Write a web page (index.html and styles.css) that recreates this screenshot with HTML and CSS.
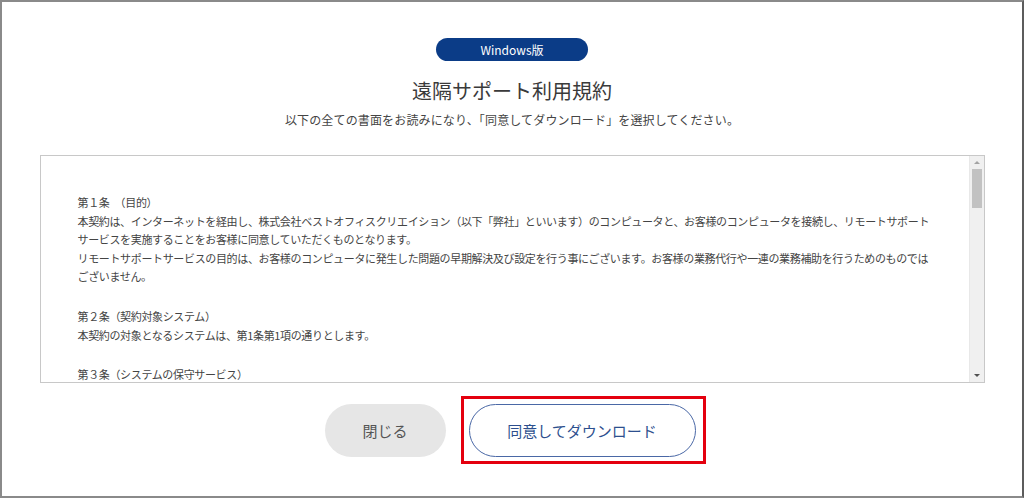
FILE: index.html
```html
<!DOCTYPE html>
<html lang="ja">
<head>
    <meta charset="UTF-8">
    <meta name="viewport" content="width=device-width, initial-scale=1.0">
    <title>遠隔サポート利用規約</title>
    <link rel="stylesheet" href="styles.css">
</head>
<body>
  <div class="modal">
    <div class="badge">Windows版</div>
    <h1>遠隔サポート利用規約</h1>
    <p class="subtitle">以下の全ての書面をお読みになり、「同意してダウンロード」を選択してください。</p>

    <div class="terms">
        <div class="terms-body">
            <p>第１条　（目的）<br>
            本契約は、インターネットを経由し、株式会社ベストオフィスクリエイション（以下「弊社」といいます）のコンピュータと、お客様のコンピュータを接続し、リモートサポート<br>
            サービスを実施することをお客様に同意していただくものとなります。<br>
            リモートサポートサービスの目的は、お客様のコンピュータに発生した問題の早期解決及び設定を行う事にございます。お客様の業務代行や一連の業務補助を行うためのものでは<br>
            ございません。</p>
            <p>第２条（契約対象システム）<br>
            本契約の対象となるシステムは、第1条第1項の通りとします。</p>
            <p>第３条（システムの保守サービス）</p>
        </div>
        <div class="scrollbar">
            <span class="arrow up"></span>
            <div class="track"><div class="thumb"></div></div>
            <span class="arrow down"></span>
        </div>
    </div>

    <div class="actions">
        <button class="btn btn-close">閉じる</button>
        <div class="highlight">
            <button class="btn btn-agree">同意してダウンロード</button>
        </div>
    </div>
  </div>
</body>
</html>
```

FILE: styles.css
```css
html, body {
    margin: 0;
    padding: 0;
}
body {
    font-family: "Noto Sans CJK JP", "Noto Sans", sans-serif;
    background-color: #ffffff;
    color: #333;
}
.modal {
    box-sizing: border-box;
    width: 1024px;
    height: 498px;
    border: 2px solid #8a8a8a;
    border-right-color: #5c5c5c;
    background-color: #fff;
    padding: 36px 38px 0;
    display: flex;
    flex-direction: column;
    align-items: center;
}
.badge {
    width: 152px;
    height: 23px;
    border-radius: 12px;
    background-color: #0b3c87;
    color: #fff;
    font-size: 12px;
    line-height: 23px;
    text-align: center;
}
h1 {
    font-size: 20px;
    font-weight: 400;
    color: #3a3a3a;
    margin: 17px 0 0;
    line-height: 26px;
}
.subtitle {
    font-size: 12px;
    letter-spacing: 0.15px;
    color: #444;
    margin: 7px 0 0;
    line-height: 17px;
}
.terms {
    margin-top: 27px;
    width: 945px;
    height: 228px;
    box-sizing: border-box;
    border: 1px solid #c8c8c8;
    display: flex;
    overflow: hidden;
}
.terms-body {
    flex: 1;
    padding: 37px 0 0 37px;
    overflow: hidden;
    font-size: 11px;
    letter-spacing: -0.35px;
    line-height: 18.6px;
    color: #444;
    white-space: nowrap;
}
.terms-body p {
    margin: 0 0 21px;
}
.scrollbar {
    width: 14px;
    background-color: #f0f0f0;
    border-left: 1px solid #e8e8e8;
    display: flex;
    flex-direction: column;
    align-items: center;
}
.arrow {
    width: 0;
    height: 0;
    margin: 5px 0;
    border-left: 3px solid transparent;
    border-right: 3px solid transparent;
}
.arrow.up {
    border-bottom: 3px solid #a3a3a3;
}
.arrow.down {
    border-top: 3px solid #505050;
}
.track {
    flex: 1;
    width: 100%;
    display: flex;
    justify-content: center;
}
.thumb {
    width: 10px;
    height: 39px;
    background-color: #c2c2c2;
}
.actions {
    margin-top: 13px;
    display: flex;
    align-items: center;
    gap: 15px;
    margin-left: 6px;
}
.btn {
    font-family: inherit;
    font-size: 15px;
    height: 53px;
    border-radius: 27px;
    cursor: pointer;
}
.btn-close {
    width: 121px;
    border: none;
    background-color: #e6e6e6;
    color: #555;
}
.highlight {
    border: 3px solid #e4000f;
    padding: 5px 7px 4px 5px;
}
.btn-agree {
    display: block;
    width: 227px;
    background-color: #fff;
    border: 1px solid #4a68a6;
    color: #2d4f8e;
}
```
